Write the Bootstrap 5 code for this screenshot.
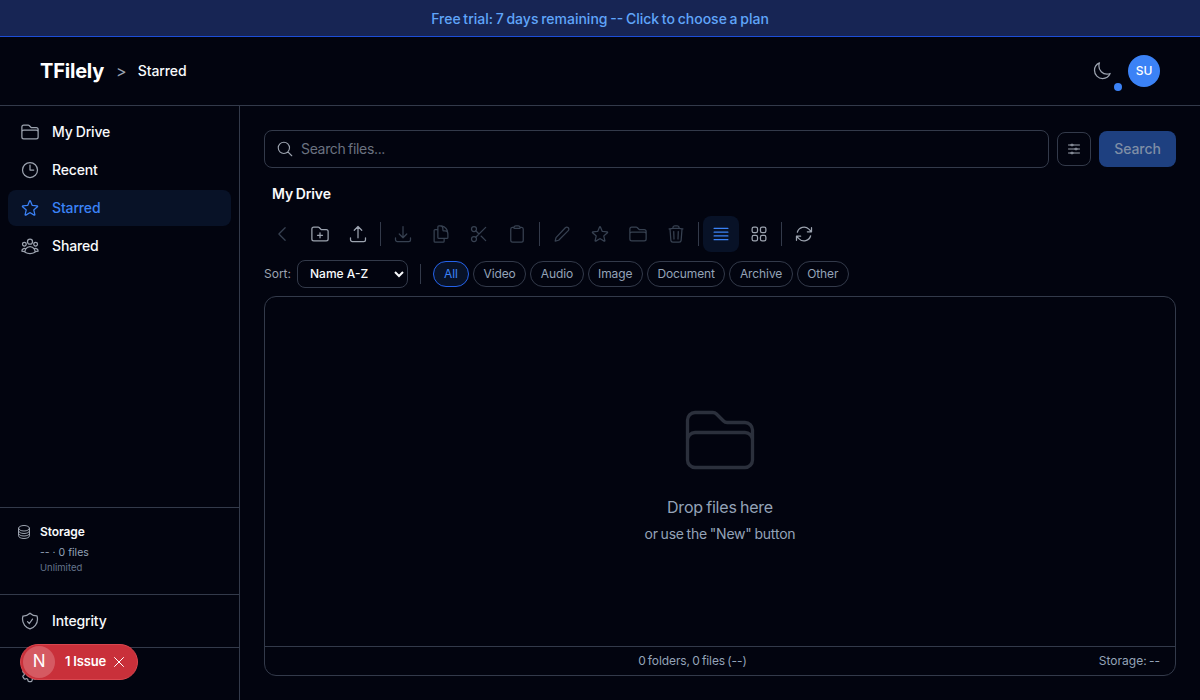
<!DOCTYPE html>
<html lang="en">
<head>
  <meta charset="UTF-8" />
  <meta name="viewport" content="width=device-width, initial-scale=1.0"/>
  <title>TFilely - Starred</title>
  <link href="https://cdn.jsdelivr.net/npm/bootstrap@5.3.2/dist/css/bootstrap.min.css" rel="stylesheet">
  <style>
    html, body { height: 700px; overflow: hidden; }
    body { background: #02040f; color: #f8fafc; font-family: Inter, "Liberation Sans", sans-serif; font-size: 14px; word-spacing: -1px; }
    svg { fill: none; stroke: currentColor; stroke-width: 1.5; stroke-linecap: round; stroke-linejoin: round; flex: none; display: block; }

    .trial-bar { height: 37px; background: #172554; border-bottom: 1px solid #1d4ed8; color: #60a5fa; font-size: 14px; font-weight: 500; }
    .top-head { height: 69px; border-bottom: 1px solid #333a4a; padding: 0 40px; }
    .brand-name { font-size: 20px; font-weight: 700; letter-spacing: -.2px; color: #fff; }
    .crumb-sep { color: #9ca3af; font-size: 16px; margin: 0 11px 0 12px; }
    .crumb-now { font-weight: 500; font-size: 14px; margin-bottom: 2px; letter-spacing: -.1px; }
    .moon-btn { color: #9ca3af; position: relative; }
    .moon-dot { position: absolute; width: 8px; height: 8px; border-radius: 50%; background: #3b82f6; right: -10px; bottom: -10px; }
    .user-chip { width: 32px; height: 32px; border-radius: 50%; background: #3b82f6; color: #fff; font-size: 12px; font-weight: 500; }

    .page-body { height: 594px; }
    .side-col { width: 240px; border-right: 1px solid #333a4a; flex: none; }
    .side-link { height: 36px; padding: 0 12px; border-radius: 8px; gap: 12px; color: #f8fafc; font-weight: 500; margin-bottom: 2px; letter-spacing: -.15px; word-spacing: -.5px; }
    .side-link span { margin-bottom: 2px; }
    .side-link svg { color: #9ca3af; }
    .side-link.is-on { background: #081227; color: #3b82f6; }
    .side-link.is-on svg { color: #3b82f6; }
    .side-link.is-low span { margin-bottom: 5px; }
    .side-part { border-top: 1px solid #333a4a; }
    .store-box { height: 87px; padding: 16px 16px 0; gap: 8px; }
    .store-box svg { color: #9ca3af; }
    .store-title { font-size: 12px; font-weight: 600; line-height: 16px; letter-spacing: -.1px; }
    .store-info { font-size: 10.5px; color: #94a3b8; line-height: 16px; margin-top: 5px; word-spacing: 0; }
    .store-limit { font-size: 9.5px; color: #64748b; line-height: 14px; }

    .main-col { padding: 24px; min-width: 0; }
    .find-box { height: 38px; border: 1px solid #333a4a; border-radius: 8px; padding: 0 11px; gap: 7px; color: #9ca3af; }
    .find-box input { background: transparent; border: 0; outline: 0; color: #f8fafc; font-size: 14px; width: 100%; letter-spacing: -.33px; word-spacing: -1px; padding: 0 0 2px; }
    .find-box input::placeholder { color: #6b7280; opacity: 1; }
    .tune-btn { width: 34px; height: 34px; border: 1px solid #333a4a; border-radius: 8px; color: #9ca3af; background: transparent; padding: 0; }
    .find-btn { width: 77px; height: 36px; background: #1e4080; border: 0; border-radius: 8px; color: #7f8ea6; font-weight: 500; font-size: 14px; padding: 0 0 2px; letter-spacing: -.1px; }
    .folder-title { font-weight: 600; padding-left: 8px; line-height: 20px; margin: 16px 0 12px; letter-spacing: -.15px; word-spacing: -.5px; }

    .tool-row { gap: 2px; height: 36px; margin-bottom: 8px; }
    .tool-btn { width: 36px; height: 36px; border: 0; background: transparent; color: #9ca3af; border-radius: 8px; padding: 0; }
    .tool-btn.is-off { color: #374151; }
    .tool-btn.is-on { background: #081227; color: #3b82f6; }
    .tool-sep { width: 1px; height: 24px; background: #333a4a; margin: 0 2px; }

    .sort-row { height: 28px; margin-bottom: 8px; }
    .sort-label { font-size: 12px; color: #9ca3af; margin-right: 6px; }
    .sort-pick { color-scheme: dark; width: 111px; height: 28px; border: 1px solid #333a4a; border-radius: 8px; background-color: #02040f; color: #f8fafc; font-size: 12px; font-weight: 500; padding: 0 0 1px 8px; outline: 0; }
    .sort-sep { width: 1px; height: 20px; background: #333a4a; margin: 0 12px; }
    .kind-pill { height: 26px; border: 1px solid #333a4a; border-radius: 13px; background: transparent; color: #94a3b8; font-size: 12px; padding: 0 9.5px; margin-right: 4px; letter-spacing: -.1px; }
    .kind-pill.is-on { border-color: #2563eb; background: #081227; color: #3b82f6; min-width: 36px; }

    .drop-area { height: 380px; border: 1px solid #333a4a; border-radius: 12px; }
    .drop-mid { color: #94a3b8; }
    .drop-mid svg { color: #2b303c; stroke-width: 1; }
    .drop-big { font-size: 16px; line-height: 24px; margin-top: 15px; letter-spacing: -.2px; }
    .drop-small { font-size: 14px; line-height: 20px; margin-top: 5px; letter-spacing: -.2px; }
    .drop-foot { height: 29px; border-top: 1px solid #333a4a; padding: 0 15px; font-size: 12px; color: #94a3b8; }
    .drop-foot span:nth-child(2) { margin-left: 6px; letter-spacing: -.1px; }

    .issue-pill { position: fixed; left: 20px; bottom: 20px; height: 36px; width: 118px; border-radius: 18px; background: #c9303a; border: 1px solid #d9474f; color: #fff; padding: 0 12px 0 2px; font-size: 13px; font-weight: 600; letter-spacing: -.2px; word-spacing: 0; }
    .issue-pill svg { stroke-width: 1; }
    .issue-logo { width: 32px; height: 32px; border-radius: 50%; background: #d55a62; font-size: 17px; font-weight: 400; margin-right: 10px; }
  </style>
</head>
<body>

  <!-- Trial banner -->
  <div class="trial-bar d-flex align-items-center justify-content-center">Free trial: 7 days remaining -- Click to choose a plan</div>

  <!-- Header -->
  <header class="top-head d-flex align-items-center justify-content-between">
    <div class="d-flex align-items-center">
      <span class="brand-name">TFilely</span>
      <span class="crumb-sep">&gt;</span>
      <span class="crumb-now">Starred</span>
    </div>
    <div class="d-flex align-items-center gap-3">
      <span class="moon-btn">
        <svg width="20" height="20" viewBox="0 0 24 24"><path d="M21.752 15.002A9.718 9.718 0 0118 15.75c-5.385 0-9.75-4.365-9.75-9.75 0-1.33.266-2.597.748-3.752A9.753 9.753 0 003 11.25C3 16.635 7.365 21 12.75 21a9.753 9.753 0 009.002-5.998z"/></svg>
        <span class="moon-dot"></span>
      </span>
      <span class="user-chip d-flex align-items-center justify-content-center">SU</span>
    </div>
  </header>

  <div class="page-body d-flex">
    <!-- Sidebar -->
    <aside class="side-col d-flex flex-column">
      <nav class="flex-grow-1 p-2">
        <a class="side-link d-flex align-items-center text-decoration-none" href="#">
          <svg width="20" height="20" viewBox="0 0 24 24"><path d="M2.25 12.75V12A2.25 2.25 0 014.5 9.75h15A2.25 2.25 0 0121.75 12v.75m-8.69-6.44l-2.12-2.12a1.5 1.5 0 00-1.061-.44H4.5A2.25 2.25 0 002.25 6v12a2.25 2.25 0 002.25 2.25h15A2.25 2.25 0 0021.75 18V9a2.25 2.25 0 00-2.25-2.25h-5.379a1.5 1.5 0 01-1.06-.44z"/></svg>
          <span>My Drive</span>
        </a>
        <a class="side-link d-flex align-items-center text-decoration-none" href="#">
          <svg width="20" height="20" viewBox="0 0 24 24"><path d="M12 6v6h4.5m4.5 0a9 9 0 11-18 0 9 9 0 0118 0z"/></svg>
          <span>Recent</span>
        </a>
        <a class="side-link is-on d-flex align-items-center text-decoration-none" href="#">
          <svg width="20" height="20" viewBox="0 0 24 24"><path d="M11.48 3.499a.562.562 0 011.04 0l2.125 5.111a.563.563 0 00.475.345l5.518.442c.499.04.701.663.321.988l-4.204 3.602a.563.563 0 00-.182.557l1.285 5.385a.562.562 0 01-.84.61l-4.725-2.885a.562.562 0 00-.586 0L6.982 20.54a.562.562 0 01-.84-.61l1.285-5.386a.562.562 0 00-.182-.557l-4.204-3.602a.563.563 0 01.321-.988l5.518-.442a.563.563 0 00.475-.345L11.48 3.5z"/></svg>
          <span>Starred</span>
        </a>
        <a class="side-link d-flex align-items-center text-decoration-none" href="#">
          <svg width="20" height="20" viewBox="0 0 24 24"><path d="M18 18.72a9.094 9.094 0 003.741-.479 3 3 0 00-4.682-2.72m.94 3.198l.001.031c0 .225-.012.447-.037.666A11.944 11.944 0 0112 21c-2.17 0-4.207-.576-5.963-1.584A6.062 6.062 0 016 18.719m12 0a5.971 5.971 0 00-.941-3.197m0 0A5.995 5.995 0 0012 12.75a5.995 5.995 0 00-5.058 2.772m0 0a3 3 0 00-4.681 2.72 8.986 8.986 0 003.74.477m.94-3.197a5.971 5.971 0 00-.94 3.197M15 6.75a3 3 0 11-6 0 3 3 0 016 0zm6 3a2.25 2.25 0 11-4.5 0 2.25 2.25 0 014.5 0zm-13.5 0a2.25 2.25 0 11-4.5 0 2.25 2.25 0 014.5 0z"/></svg>
          <span>Shared</span>
        </a>
      </nav>
      <div class="side-part store-box d-flex">
        <svg width="16" height="16" viewBox="0 0 24 24"><path d="M20.25 6.375c0 2.278-3.694 4.125-8.25 4.125S3.75 8.653 3.75 6.375m16.5 0c0-2.278-3.694-4.125-8.25-4.125S3.75 4.097 3.75 6.375m16.5 0v11.25c0 2.278-3.694 4.125-8.25 4.125s-8.25-1.847-8.25-4.125V6.375m16.5 0v3.75m-16.5-3.75v3.75m16.5 0v3.75C20.25 16.153 16.556 18 12 18s-8.25-1.847-8.25-4.125v-3.75m16.5 0c0 2.278-3.694 4.125-8.25 4.125s-8.25-1.847-8.25-4.125"/></svg>
        <div>
          <div class="store-title">Storage</div>
          <div class="store-info">-- · 0 files</div>
          <div class="store-limit">Unlimited</div>
        </div>
      </div>
      <div class="side-part" style="padding: 8px 8px 6px">
        <a class="side-link d-flex align-items-center text-decoration-none" href="#">
          <svg width="20" height="20" viewBox="0 0 24 24"><path d="M9 12.75L11.25 15 15 9.75m-3-7.036A11.959 11.959 0 013.598 6 11.99 11.99 0 003 9.749c0 5.592 3.824 10.29 9 11.623 5.176-1.332 9-6.03 9-11.622 0-1.31-.21-2.571-.598-3.751h-.152c-3.196 0-6.1-1.248-8.25-3.285z"/></svg>
          <span>Integrity</span>
        </a>
      </div>
      <div class="side-part" style="padding: 8px 8px 6px; height: 53px">
        <a class="side-link is-low d-flex align-items-center text-decoration-none" href="#">
          <svg width="20" height="20" viewBox="0 0 24 24"><path d="M9.594 3.94c.09-.542.56-.94 1.11-.94h2.593c.55 0 1.02.398 1.11.94l.213 1.281c.063.374.313.686.645.87.074.04.147.083.22.127.324.196.72.257 1.075.124l1.217-.456a1.125 1.125 0 011.37.49l1.296 2.247a1.125 1.125 0 01-.26 1.431l-1.003.827c-.293.24-.438.613-.431.992a6.759 6.759 0 010 .255c-.007.378.138.75.43.99l1.005.828c.424.35.534.954.26 1.43l-1.298 2.247a1.125 1.125 0 01-1.369.491l-1.217-.456c-.355-.133-.75-.072-1.076.124a6.57 6.57 0 01-.22.128c-.331.183-.581.495-.644.869l-.213 1.28c-.09.543-.56.941-1.11.941h-2.594c-.55 0-1.02-.398-1.11-.94l-.213-1.281c-.062-.374-.312-.686-.644-.87a6.52 6.52 0 01-.22-.127c-.325-.196-.72-.257-1.076-.124l-1.217.456a1.125 1.125 0 01-1.369-.49l-1.297-2.247a1.125 1.125 0 01.26-1.431l1.004-.827c.292-.24.437-.613.43-.992a6.932 6.932 0 010-.255c.007-.378-.138-.75-.43-.99l-1.004-.828a1.125 1.125 0 01-.26-1.43l1.297-2.247a1.125 1.125 0 011.37-.491l1.216.456c.356.133.751.072 1.076-.124.072-.044.146-.087.22-.128.332-.183.582-.495.644-.869l.214-1.281z"/><path d="M15 12a3 3 0 11-6 0 3 3 0 016 0z"/></svg>
          <span>Settings</span>
        </a>
      </div>
    </aside>

    <!-- Main -->
    <main class="main-col flex-grow-1">
      <div class="d-flex align-items-center gap-2">
        <label class="find-box d-flex align-items-center flex-grow-1 mb-0">
          <svg width="18" height="18" viewBox="0 0 24 24"><path d="M21 21l-5.197-5.197m0 0A7.5 7.5 0 105.196 5.196a7.5 7.5 0 0010.607 10.607z"/></svg>
          <input type="text" placeholder="Search files...">
        </label>
        <button class="tune-btn d-flex align-items-center justify-content-center" type="button">
          <svg width="16" height="16" viewBox="0 0 24 24"><path d="M10.5 6h9.75M10.5 6a1.5 1.5 0 11-3 0m3 0a1.5 1.5 0 10-3 0M3.75 6H7.5m3 12h9.75m-9.75 0a1.5 1.5 0 01-3 0m3 0a1.5 1.5 0 00-3 0m-3.75 0H7.5m9-6h3.75m-3.75 0a1.5 1.5 0 01-3 0m3 0a1.5 1.5 0 00-3 0m-9.75 0h9.75"/></svg>
        </button>
        <button class="find-btn" type="button">Search</button>
      </div>

      <div class="folder-title">My Drive</div>

      <div class="tool-row d-flex align-items-center">
        <button class="tool-btn is-off d-flex align-items-center justify-content-center" type="button"><svg width="20" height="20" viewBox="0 0 24 24"><path d="M15.75 19.5L8.25 12l7.5-7.5"/></svg></button>
        <button class="tool-btn d-flex align-items-center justify-content-center" type="button"><svg width="20" height="20" viewBox="0 0 24 24"><path d="M12 10.5v6m3-3H9m4.06-7.19l-2.12-2.12a1.5 1.5 0 00-1.061-.44H4.5A2.25 2.25 0 002.25 6v12a2.25 2.25 0 002.25 2.25h15A2.25 2.25 0 0021.75 18V9a2.25 2.25 0 00-2.25-2.25h-5.379a1.5 1.5 0 01-1.06-.44z"/></svg></button>
        <button class="tool-btn d-flex align-items-center justify-content-center" type="button"><svg width="20" height="20" viewBox="0 0 24 24"><path d="M3 16.5v2.25A2.25 2.25 0 005.25 21h13.5A2.25 2.25 0 0021 18.75V16.5m-13.5-9L12 3m0 0l4.5 4.5M12 3v13.5"/></svg></button>
        <span class="tool-sep"></span>
        <button class="tool-btn is-off d-flex align-items-center justify-content-center" type="button"><svg width="20" height="20" viewBox="0 0 24 24"><path d="M3 16.5v2.25A2.25 2.25 0 005.25 21h13.5A2.25 2.25 0 0021 18.75V16.5M16.5 12L12 16.5m0 0L7.5 12m4.5 4.5V3"/></svg></button>
        <button class="tool-btn is-off d-flex align-items-center justify-content-center" type="button"><svg width="20" height="20" viewBox="0 0 24 24"><path d="M15.75 17.25v3.375c0 .621-.504 1.125-1.125 1.125h-9.75a1.125 1.125 0 01-1.125-1.125V7.875c0-.621.504-1.125 1.125-1.125H6.75a9.06 9.06 0 011.5.124m7.5 10.376h3.375c.621 0 1.125-.504 1.125-1.125V11.25c0-4.46-3.243-8.161-7.5-8.876a9.06 9.06 0 00-1.5-.124H9.375c-.621 0-1.125.504-1.125 1.125v3.5m7.5 10.375H9.375a1.125 1.125 0 01-1.125-1.125v-9.25m12 6.625v-1.875a3.375 3.375 0 00-3.375-3.375h-1.5a1.125 1.125 0 01-1.125-1.125v-1.5a3.375 3.375 0 00-3.375-3.375H9.75"/></svg></button>
        <button class="tool-btn is-off d-flex align-items-center justify-content-center" type="button"><svg width="20" height="20" viewBox="0 0 24 24"><circle cx="6" cy="6" r="3"/><circle cx="6" cy="18" r="3"/><path d="M20 4L8.12 15.88M14.47 14.48L20 20M8.12 8.12L12 12"/></svg></button>
        <button class="tool-btn is-off d-flex align-items-center justify-content-center" type="button"><svg width="20" height="20" viewBox="0 0 24 24"><path d="M15.666 3.888A2.25 2.25 0 0013.5 2.25h-3c-1.03 0-1.9.693-2.166 1.638m7.332 0c.055.194.084.4.084.612v0a.75.75 0 01-.75.75H9a.75.75 0 01-.75-.75v0c0-.212.03-.418.084-.612m7.332 0c.646.049 1.288.11 1.927.184 1.1.128 1.907 1.077 1.907 2.185V19.5a2.25 2.25 0 01-2.25 2.25H6.75A2.25 2.25 0 014.5 19.5V6.257c0-1.108.806-2.057 1.907-2.185a48.208 48.208 0 011.927-.184"/></svg></button>
        <span class="tool-sep"></span>
        <button class="tool-btn is-off d-flex align-items-center justify-content-center" type="button"><svg width="20" height="20" viewBox="0 0 24 24"><path d="M16 4.5a2.4 2.4 0 013.5 3.5L8 19.5l-4.2 1 1-4.2z"/></svg></button>
        <button class="tool-btn is-off d-flex align-items-center justify-content-center" type="button"><svg width="20" height="20" viewBox="0 0 24 24"><path d="M11.48 3.499a.562.562 0 011.04 0l2.125 5.111a.563.563 0 00.475.345l5.518.442c.499.04.701.663.321.988l-4.204 3.602a.563.563 0 00-.182.557l1.285 5.385a.562.562 0 01-.84.61l-4.725-2.885a.562.562 0 00-.586 0L6.982 20.54a.562.562 0 01-.84-.61l1.285-5.386a.562.562 0 00-.182-.557l-4.204-3.602a.563.563 0 01.321-.988l5.518-.442a.563.563 0 00.475-.345L11.48 3.5z"/></svg></button>
        <button class="tool-btn is-off d-flex align-items-center justify-content-center" type="button"><svg width="20" height="20" viewBox="0 0 24 24"><path d="M2.25 12.75V12A2.25 2.25 0 014.5 9.75h15A2.25 2.25 0 0121.75 12v.75m-8.69-6.44l-2.12-2.12a1.5 1.5 0 00-1.061-.44H4.5A2.25 2.25 0 002.25 6v12a2.25 2.25 0 002.25 2.25h15A2.25 2.25 0 0021.75 18V9a2.25 2.25 0 00-2.25-2.25h-5.379a1.5 1.5 0 01-1.06-.44z"/></svg></button>
        <button class="tool-btn is-off d-flex align-items-center justify-content-center" type="button"><svg width="20" height="20" viewBox="0 0 24 24"><path d="M14.74 9l-.346 9m-4.788 0L9.26 9m9.968-3.21c.342.052.682.107 1.022.166m-1.022-.165L18.16 19.673a2.25 2.25 0 01-2.244 2.077H8.084a2.25 2.25 0 01-2.244-2.077L4.772 5.79m14.456 0a48.108 48.108 0 00-3.478-.397m-12 .562c.34-.059.68-.114 1.022-.165m0 0a48.11 48.11 0 013.478-.397m7.5 0v-.916c0-1.18-.91-2.164-2.09-2.201a51.964 51.964 0 00-3.32 0c-1.18.037-2.09 1.022-2.09 2.201v.916m7.5 0a48.667 48.667 0 00-7.5 0"/></svg></button>
        <span class="tool-sep"></span>
        <button class="tool-btn is-on d-flex align-items-center justify-content-center" type="button"><svg width="20" height="20" viewBox="0 0 24 24"><path d="M3.75 5.25h16.5M3.75 9.75h16.5M3.75 14.25h16.5M3.75 18.75h16.5"/></svg></button>
        <button class="tool-btn d-flex align-items-center justify-content-center" type="button"><svg width="20" height="20" viewBox="0 0 24 24"><rect x="3.75" y="3.75" width="6.5" height="6.5" rx="2"/><rect x="13.75" y="3.75" width="6.5" height="6.5" rx="2"/><rect x="3.75" y="13.75" width="6.5" height="6.5" rx="2"/><rect x="13.75" y="13.75" width="6.5" height="6.5" rx="2"/></svg></button>
        <span class="tool-sep"></span>
        <button class="tool-btn d-flex align-items-center justify-content-center" type="button"><svg width="20" height="20" viewBox="0 0 24 24"><path d="M16.023 9.348h4.992v-.001M2.985 19.644v-4.992m0 0h4.992m-4.993 0l3.181 3.183a8.25 8.25 0 0013.803-3.7M4.031 9.865a8.25 8.25 0 0113.803-3.7l3.181 3.182m0-4.991v4.99"/></svg></button>
      </div>

      <div class="sort-row d-flex align-items-center">
        <span class="sort-label">Sort:</span>
        <select class="sort-pick">
          <option>Name A-Z</option>
          <option>Name Z-A</option>
          <option>Newest</option>
        </select>
        <span class="sort-sep"></span>
        <button class="kind-pill is-on" type="button">All</button>
        <button class="kind-pill" type="button">Video</button>
        <button class="kind-pill" type="button">Audio</button>
        <button class="kind-pill" type="button">Image</button>
        <button class="kind-pill" type="button">Document</button>
        <button class="kind-pill" type="button">Archive</button>
        <button class="kind-pill" type="button">Other</button>
      </div>

      <div class="drop-area d-flex flex-column">
        <div class="drop-mid flex-grow-1 d-flex flex-column align-items-center justify-content-center">
          <svg width="80" height="80" viewBox="0 0 24 24"><path d="M2.25 12.75V12A2.25 2.25 0 014.5 9.75h15A2.25 2.25 0 0121.75 12v.75m-8.69-6.44l-2.12-2.12a1.5 1.5 0 00-1.061-.44H4.5A2.25 2.25 0 002.25 6v12a2.25 2.25 0 002.25 2.25h15A2.25 2.25 0 0021.75 18V9a2.25 2.25 0 00-2.25-2.25h-5.379a1.5 1.5 0 01-1.06-.44z"/></svg>
          <div class="drop-big">Drop files here</div>
          <div class="drop-small">or use the "New" button</div>
        </div>
        <div class="drop-foot d-flex align-items-center justify-content-between">
          <span></span>
          <span>0 folders, 0 files (--)</span>
          <span>Storage: --</span>
        </div>
      </div>
    </main>
  </div>

  <!-- Dev overlay -->
  <div class="issue-pill d-flex align-items-center">
    <span class="issue-logo d-flex align-items-center justify-content-center">N</span>
    <span>1 Issue</span>
    <svg class="ms-auto" width="12" height="12" viewBox="0 0 12 12"><path d="M1.5 1.5l9 9M10.5 1.5l-9 9"/></svg>
  </div>

  <script src="https://cdn.jsdelivr.net/npm/bootstrap@5.3.2/dist/js/bootstrap.bundle.min.js"></script>
</body>
</html>
